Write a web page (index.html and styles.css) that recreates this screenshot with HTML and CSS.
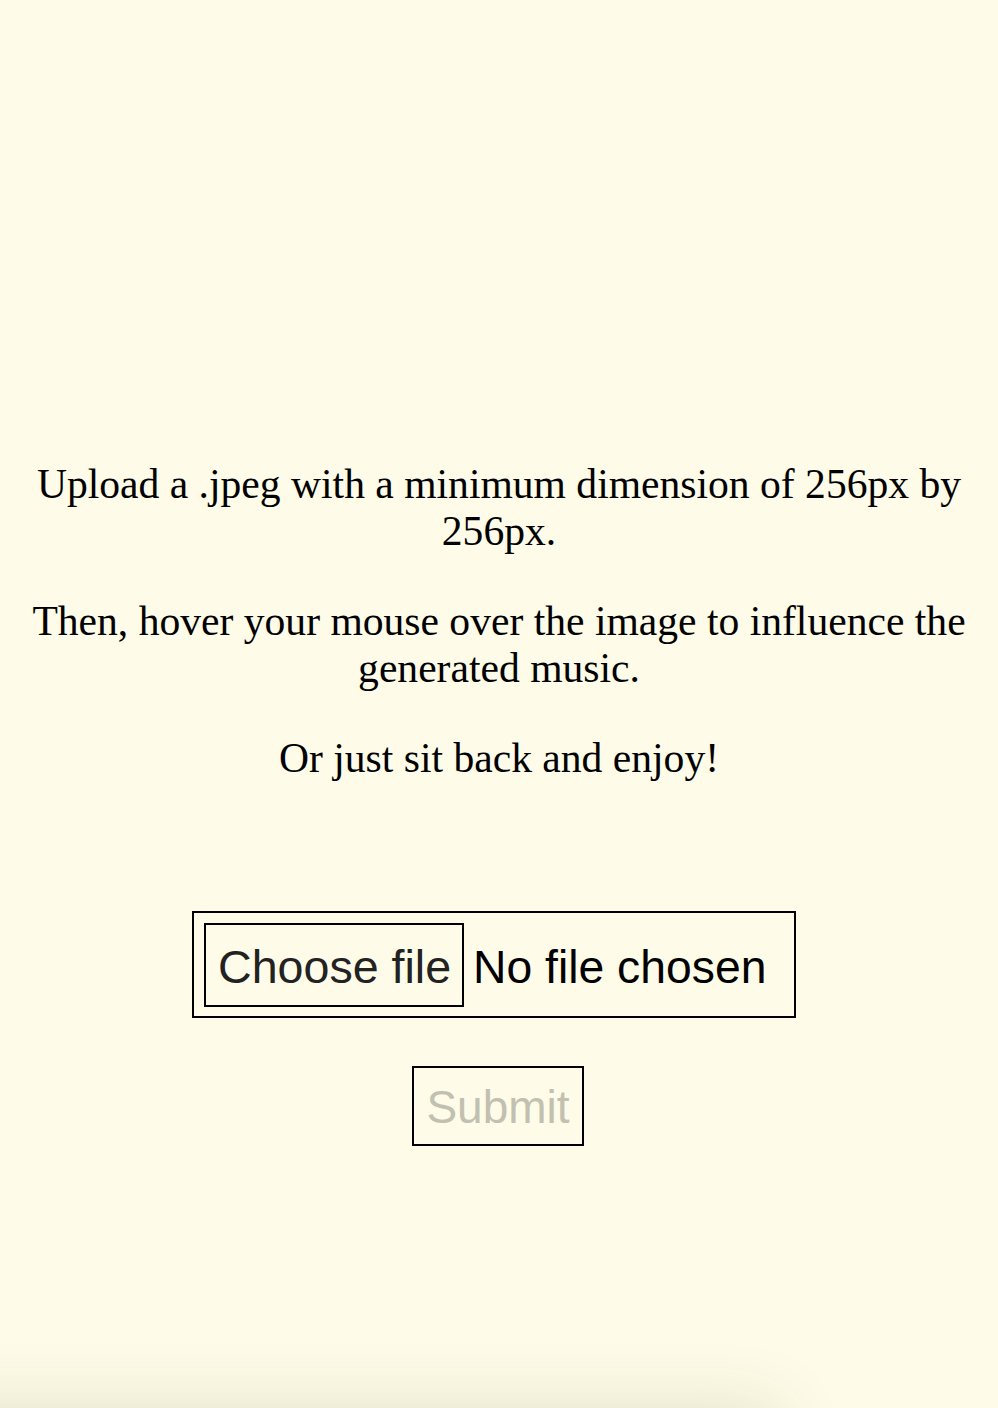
FILE: index.html
```html
<!DOCTYPE html>
<html>
<head>
<meta charset="utf-8">
<link rel="stylesheet" href="styles.css">
</head>
<body>
<main class="page">
  <section class="intro">
    <p>Upload a .jpeg with a minimum dimension of 256px by 256px.</p>
    <p>Then, hover your mouse over the image to influence the generated music.</p>
    <p>Or just sit back and enjoy!</p>
  </section>
  <form class="upload">
    <div class="file-field">
      <span class="file-btn">Choose file</span>
      <span class="file-name">No file chosen</span>
    </div>
    <button class="submit" type="button" disabled>Submit</button>
  </form>
</main>
<div class="dock"></div>
</body>
</html>
```

FILE: styles.css
```css
html, body {
  margin: 0;
  padding: 0;
  background: #fefce8;
}
body {
  height: 1408px;
  overflow: hidden;
  font-family: "Liberation Serif", "Times New Roman", serif;
  color: #000;
}
.page {
  display: flex;
  flex-direction: column;
  align-items: center;
  padding: 461px 20px 0;
}
.intro {
  text-align: center;
  font-size: 41.6px;
  line-height: 47px;
  width: 958px;
}
.intro p {
  margin: 0 0 43px;
}
.upload {
  display: flex;
  flex-direction: column;
  align-items: center;
  margin-top: 86px;
  font-family: "Liberation Sans", Arial, sans-serif;
}
.file-field {
  display: flex;
  align-items: center;
  border: 2px solid #000;
  padding: 10px 0 9px 10px;
  box-sizing: border-box;
  width: 604px;
  margin-right: 10px;
  overflow: hidden;
}
.file-btn {
  flex-shrink: 0;
  display: flex;
  align-items: center;
  box-sizing: border-box;
  height: 84px;
  width: 260px;
  padding: 4px 0 0 12px;
  border: 2px solid #000;
  font-size: 46.6px;
  color: #222;
  white-space: nowrap;
}
.file-name {
  flex-shrink: 0;
  margin-left: 9px;
  padding-top: 4px;
  font-size: 46.3px;
  white-space: nowrap;
}
.submit {
  margin-top: 48px;
  box-sizing: border-box;
  width: 172px;
  height: 80px;
  margin-right: 2px;
  border: 2px solid #000;
  background: transparent;
  font-family: "Liberation Sans", Arial, sans-serif;
  font-size: 46px;
  color: #c2c0b0;
  padding: 2px 0 0;
}
.dock {
  position: fixed;
  left: -120px;
  top: 1408px;
  width: 900px;
  height: 100px;
  box-shadow: 0 0 70px 0 rgba(60, 55, 20, 0.14);
}
```
